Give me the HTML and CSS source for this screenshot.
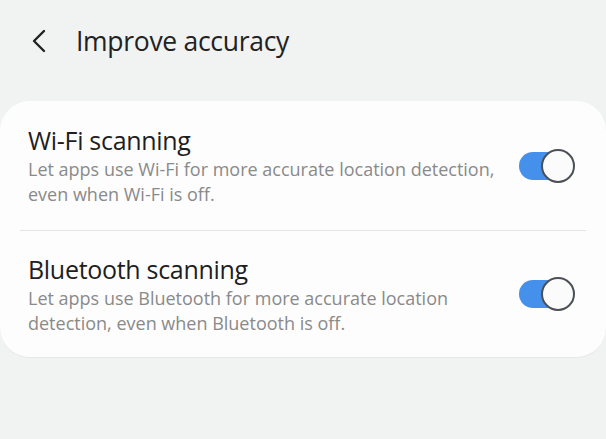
FILE: index.html
```html
<!DOCTYPE html>
<html>
<head>
<meta charset="utf-8">
<link rel="stylesheet" href="styles.css">
</head>
<body>
<header class="appbar">
  <svg class="back" width="16" height="24" viewBox="0 0 16 24"><path d="M13 2 L3 12 L13 22" fill="none" stroke="#222" stroke-width="2.4" stroke-linecap="round" stroke-linejoin="round"/></svg>
  <h1 class="title">Improve accuracy</h1>
</header>
<main class="card">
  <div class="row">
    <div class="text">
      <div class="label">Wi-Fi scanning</div>
      <div class="desc">Let apps use Wi-Fi for more accurate location detection,<br>even when Wi-Fi is off.</div>
    </div>
    <div class="switch"><span class="thumb"></span></div>
  </div>
  <div class="divider"></div>
  <div class="row row2">
    <div class="text">
      <div class="label">Bluetooth scanning</div>
      <div class="desc">Let apps use Bluetooth for more accurate location<br>detection, even when Bluetooth is off.</div>
    </div>
    <div class="switch"><span class="thumb"></span></div>
  </div>
</main>
</body>
</html>
```
FILE: styles.css
```css
html, body {
  margin: 0;
  padding: 0;
  background: #f1f2f2;
  font-family: "Open Sans", "Noto Sans", sans-serif;
}
.appbar {
  height: 101px;
  display: flex;
  align-items: center;
  padding-left: 31px;
  padding-bottom: 20px;
  box-sizing: border-box;
}
.back {
  display: block;
}
.title {
  margin: 0 0 0 29px;
  font-size: 26.5px;
  font-weight: 400;
  color: #222;
  letter-spacing: -0.3px;
}
.card {
  background: #fdfdfd;
  border-radius: 30px;
  border-bottom: 1px solid #e6e7e7;
}
.row {
  height: 129px;
  display: flex;
  align-items: center;
  padding: 0 33px 0 28px;
  box-sizing: border-box;
}
.row2 {
  height: 126px;
}
.text {
  flex: 1;
}
.label {
  font-size: 25px;
  color: #1e1e1e;
  line-height: 32px;
  letter-spacing: -0.3px;
  margin-bottom: 1px;
}
.desc {
  font-size: 18px;
  color: #8a8a8a;
  line-height: 25px;
  letter-spacing: 0;
}
.divider {
  height: 1px;
  background: #e3e4e4;
  margin: 0 20px;
}
.switch {
  position: relative;
  width: 54px;
  height: 28px;
  border-radius: 14px;
  background: #4590ea;
}
.thumb {
  position: absolute;
  right: -2px;
  top: -3px;
  width: 30px;
  height: 30px;
  border-radius: 50%;
  background: #fbfbfb;
  border: 2px solid #4b5056;
}
```
